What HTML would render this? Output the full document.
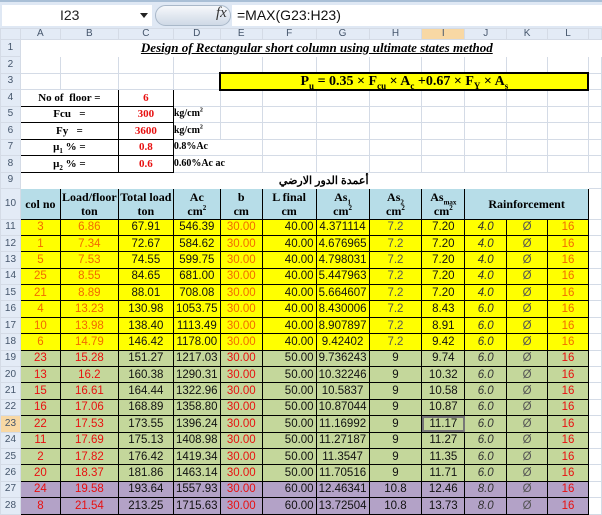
<!DOCTYPE html>
<html><head><meta charset="utf-8"><style>
*{margin:0;padding:0;box-sizing:border-box}
body{width:602px;height:509px;overflow:hidden;background:#fff;font-family:"Liberation Sans",sans-serif;position:relative}
#fb{position:absolute;left:0;top:0;width:602px;height:28px;background:#dfe8f4;border-top:2px solid #a9bfd6}
#nb{position:absolute;left:2px;top:3px;width:150px;height:21px;background:#fff;font-size:14px;line-height:21px;padding-left:58px;color:#222}
#arr{position:absolute;left:140px;top:11px;border-left:4px solid transparent;border-right:4px solid transparent;border-top:5px solid #222}
#pill{position:absolute;left:155px;top:3px;width:76px;height:21px;border-radius:11px;background:linear-gradient(#f6f8fb,#cfd9e6);border:1px solid #a9b8c9}
#fx{position:absolute;left:216px;top:3px;font:italic 15px "Liberation Serif",serif;color:#333}
#ft{position:absolute;left:232px;top:3px;width:370px;height:21px;background:#fff;font-size:14px;line-height:21px;padding-left:5px;color:#111}
table{position:absolute;left:0;top:28px;border-collapse:collapse;table-layout:fixed;font-size:11.5px}
td{border:1px solid #d4dbe6;white-space:nowrap;overflow:hidden;text-align:center;padding:0;line-height:12px}
sub,sup{line-height:0}
tr.ch td{background:#e3ebf6;color:#44556b;font-size:10px;height:11px;line-height:10px}
td.rh{background:#e3ebf6;color:#44556b;font-size:10px}
.sel{background:#f8d8a4!important}
.t{font-family:"Liberation Serif",serif;font-weight:bold}
.b td.d{border:1px solid #000}
.y td.d{background:#ffff00}
.g td.d{background:#c4d79b}
.p td.d{background:#b3a2c7}
.h td.d{background:#b7dde8;border:1px solid #000;font-family:"Liberation Serif",serif;font-weight:bold;font-size:12px;line-height:14px}
.o{color:#f26a00}.r{color:#e81010}.k{color:#111}.i{font-style:italic;color:#333}.z{color:#555}
.y .l{color:#f26a00}.g .l,.p .l{color:#e81010}
.f{text-align:right!important;padding-right:2px!important}
</style></head><body>
<div id="fb"><div id="nb">I23</div><div id="arr"></div><div id="pill"></div><div id="fx">fx</div><div id="ft">=MAX(G23:H23)</div></div>
<table>
<colgroup><col style="width:20px"><col style="width:40px"><col style="width:58px"><col style="width:55px"><col style="width:47px"><col style="width:42px"><col style="width:54px"><col style="width:53px"><col style="width:53px"><col style="width:43px"><col style="width:42px"><col style="width:41px"><col style="width:41px"><col style="width:13px"></colgroup>
<tr class="ch"><td></td><td>A</td><td>B</td><td>C</td><td>D</td><td>E</td><td>F</td><td>G</td><td>H</td><td class="sel">I</td><td>J</td><td>K</td><td>L</td><td></td></tr>
<tr style="height:16.5px"><td class="rh">1</td><td colspan="13" style="border-color:#fff;text-align:left;padding-left:120px;font:bold italic 13px 'Liberation Serif',serif;text-decoration:underline">Design of Rectangular short column using ultimate states method</td></tr>
<tr style="height:16.5px"><td class="rh">2</td><td></td><td></td><td></td><td></td><td></td><td></td><td></td><td></td><td></td><td></td><td></td><td></td><td></td></tr>
<tr style="height:16.5px"><td class="rh">3</td><td></td><td></td><td></td><td></td><td colspan="8" style="background:#ffff00;border:2px solid #000;font:bold 14px 'Liberation Serif',serif;line-height:13px">P<sub style="font-size:9px">u</sub> = 0.35 × F<sub style="font-size:9px">cu</sub> × A<sub style="font-size:9px">c</sub> +0.67 × F<sub style="font-size:9px">Y</sub> × A<sub style="font-size:9px">s</sub></td><td></td></tr>
<tr style="height:16.5px"><td class="rh">4</td><td colspan="2" class="t" style="border:1px solid #000;font-size:11px">No of &nbsp;floor =</td><td class="t r" style="border:1px solid #000;font-size:11px">6</td><td></td><td></td><td></td><td></td><td></td><td></td><td></td><td></td><td></td><td></td></tr>
<tr style="height:16.5px"><td class="rh">5</td><td colspan="2" class="t" style="border:1px solid #000;font-size:11px">Fcu &nbsp; =</td><td class="t r" style="border:1px solid #000;font-size:11px">300</td><td class="t" style="text-align:left;font-size:10px">kg/cm<sup style="font-size:6px">2</sup></td><td></td><td></td><td></td><td></td><td></td><td></td><td></td><td></td><td></td></tr>
<tr style="height:16.5px"><td class="rh">6</td><td colspan="2" class="t" style="border:1px solid #000;font-size:11px">Fy &nbsp; =</td><td class="t r" style="border:1px solid #000;font-size:11px">3600</td><td class="t" style="text-align:left;font-size:10px">kg/cm<sup style="font-size:6px">2</sup></td><td></td><td></td><td></td><td></td><td></td><td></td><td></td><td></td><td></td></tr>
<tr style="height:16.5px"><td class="rh">7</td><td colspan="2" class="t" style="border:1px solid #000;font-size:11px">μ<sub style="font-size:7px">1</sub> % =</td><td class="t r" style="border:1px solid #000;font-size:11px">0.8</td><td class="t" style="text-align:left;font-size:10px" colspan="2">0.8%Ac</td><td></td><td></td><td></td><td></td><td></td><td></td><td></td><td></td></tr>
<tr style="height:16.5px"><td class="rh">8</td><td colspan="2" class="t" style="border:1px solid #000;font-size:11px">μ<sub style="font-size:7px">2</sub> % =</td><td class="t r" style="border:1px solid #000;font-size:11px">0.6</td><td class="t" style="text-align:left;font-size:10px" colspan="2">0.60%Ac ac</td><td></td><td></td><td></td><td></td><td></td><td></td><td></td><td></td></tr>
<tr style="height:16.5px"><td class="rh">9</td><td colspan="12" style="border-color:#fff;text-align:left;padding-left:258px;font:bold 11px 'Liberation Sans','Noto Sans CJK SC',sans-serif"><span style="display:inline-block;direction:rtl">أعمدة الدور الارضي</span></td><td></td></tr>
<tr class="h" style="height:30.5px"><td class="rh">10</td><td class="d">col no</td><td class="d">Load/floor<br>ton</td><td class="d">Total load<br>ton</td><td class="d">Ac<br>cm<sup style="font-size:7px">2</sup></td><td class="d">b<br>cm</td><td class="d">L final<br>cm</td><td class="d">As<sub style="font-size:7px">1</sub><br>cm<sup style="font-size:7px">2</sup></td><td class="d">As<sub style="font-size:7px">2</sub><br>cm<sup style="font-size:7px">2</sup></td><td class="d">As<sub style="font-size:7px">max</sub><br>cm<sup style="font-size:7px">2</sup></td><td class="d" colspan="3">Rainforcement</td><td></td></tr>
<tr class="b y" style="height:16.4px"><td class="rh">11</td><td class="d o">3</td><td class="d o">6.86</td><td class="d k">67.91</td><td class="d k">546.39</td><td class="d o">30.00</td><td class="d k f">40.00</td><td class="d k">4.371114</td><td class="d z">7.2</td><td class="d k">7.20</td><td class="d i">4.0</td><td class="d z">Ø</td><td class="d l">16</td><td></td></tr>
<tr class="b y" style="height:16.4px"><td class="rh">12</td><td class="d o">1</td><td class="d o">7.34</td><td class="d k">72.67</td><td class="d k">584.62</td><td class="d o">30.00</td><td class="d k f">40.00</td><td class="d k">4.676965</td><td class="d z">7.2</td><td class="d k">7.20</td><td class="d i">4.0</td><td class="d z">Ø</td><td class="d l">16</td><td></td></tr>
<tr class="b y" style="height:16.4px"><td class="rh">13</td><td class="d o">5</td><td class="d o">7.53</td><td class="d k">74.55</td><td class="d k">599.75</td><td class="d o">30.00</td><td class="d k f">40.00</td><td class="d k">4.798031</td><td class="d z">7.2</td><td class="d k">7.20</td><td class="d i">4.0</td><td class="d z">Ø</td><td class="d l">16</td><td></td></tr>
<tr class="b y" style="height:16.4px"><td class="rh">14</td><td class="d o">25</td><td class="d o">8.55</td><td class="d k">84.65</td><td class="d k">681.00</td><td class="d o">30.00</td><td class="d k f">40.00</td><td class="d k">5.447963</td><td class="d z">7.2</td><td class="d k">7.20</td><td class="d i">4.0</td><td class="d z">Ø</td><td class="d l">16</td><td></td></tr>
<tr class="b y" style="height:16.4px"><td class="rh">15</td><td class="d o">21</td><td class="d o">8.89</td><td class="d k">88.01</td><td class="d k">708.08</td><td class="d o">30.00</td><td class="d k f">40.00</td><td class="d k">5.664607</td><td class="d z">7.2</td><td class="d k">7.20</td><td class="d i">4.0</td><td class="d z">Ø</td><td class="d l">16</td><td></td></tr>
<tr class="b y" style="height:16.4px"><td class="rh">16</td><td class="d o">4</td><td class="d o">13.23</td><td class="d k">130.98</td><td class="d k">1053.75</td><td class="d o">30.00</td><td class="d k f">40.00</td><td class="d k">8.430006</td><td class="d z">7.2</td><td class="d k">8.43</td><td class="d i">6.0</td><td class="d z">Ø</td><td class="d l">16</td><td></td></tr>
<tr class="b y" style="height:16.4px"><td class="rh">17</td><td class="d o">10</td><td class="d o">13.98</td><td class="d k">138.40</td><td class="d k">1113.49</td><td class="d o">30.00</td><td class="d k f">40.00</td><td class="d k">8.907897</td><td class="d z">7.2</td><td class="d k">8.91</td><td class="d i">6.0</td><td class="d z">Ø</td><td class="d l">16</td><td></td></tr>
<tr class="b y" style="height:16.4px"><td class="rh">18</td><td class="d o">6</td><td class="d o">14.79</td><td class="d k">146.42</td><td class="d k">1178.00</td><td class="d o">30.00</td><td class="d k f">40.00</td><td class="d k">9.42402</td><td class="d z">7.2</td><td class="d k">9.42</td><td class="d i">6.0</td><td class="d z">Ø</td><td class="d l">16</td><td></td></tr>
<tr class="b g" style="height:16.4px"><td class="rh">19</td><td class="d r">23</td><td class="d r">15.28</td><td class="d k">151.27</td><td class="d k">1217.03</td><td class="d r">30.00</td><td class="d k f">50.00</td><td class="d k">9.736243</td><td class="d k">9</td><td class="d k">9.74</td><td class="d i">6.0</td><td class="d z">Ø</td><td class="d l">16</td><td></td></tr>
<tr class="b g" style="height:16.4px"><td class="rh">20</td><td class="d r">13</td><td class="d r">16.2</td><td class="d k">160.38</td><td class="d k">1290.31</td><td class="d r">30.00</td><td class="d k f">50.00</td><td class="d k">10.32246</td><td class="d k">9</td><td class="d k">10.32</td><td class="d i">6.0</td><td class="d z">Ø</td><td class="d l">16</td><td></td></tr>
<tr class="b g" style="height:16.4px"><td class="rh">21</td><td class="d r">15</td><td class="d r">16.61</td><td class="d k">164.44</td><td class="d k">1322.96</td><td class="d r">30.00</td><td class="d k f">50.00</td><td class="d k">10.5837</td><td class="d k">9</td><td class="d k">10.58</td><td class="d i">6.0</td><td class="d z">Ø</td><td class="d l">16</td><td></td></tr>
<tr class="b g" style="height:16.4px"><td class="rh">22</td><td class="d r">16</td><td class="d r">17.06</td><td class="d k">168.89</td><td class="d k">1358.80</td><td class="d r">30.00</td><td class="d k f">50.00</td><td class="d k">10.87044</td><td class="d k">9</td><td class="d k">10.87</td><td class="d i">6.0</td><td class="d z">Ø</td><td class="d l">16</td><td></td></tr>
<tr class="b g" style="height:16.4px"><td class="rh sel">23</td><td class="d r">22</td><td class="d r">17.53</td><td class="d k">173.55</td><td class="d k">1396.24</td><td class="d r">30.00</td><td class="d k f">50.00</td><td class="d k">11.16992</td><td class="d k">9</td><td class="d k" style="outline:2px solid #777;outline-offset:-2px">11.17</td><td class="d i">6.0</td><td class="d z">Ø</td><td class="d l">16</td><td></td></tr>
<tr class="b g" style="height:16.4px"><td class="rh">24</td><td class="d r">11</td><td class="d r">17.69</td><td class="d k">175.13</td><td class="d k">1408.98</td><td class="d r">30.00</td><td class="d k f">50.00</td><td class="d k">11.27187</td><td class="d k">9</td><td class="d k">11.27</td><td class="d i">6.0</td><td class="d z">Ø</td><td class="d l">16</td><td></td></tr>
<tr class="b g" style="height:16.4px"><td class="rh">25</td><td class="d r">2</td><td class="d r">17.82</td><td class="d k">176.42</td><td class="d k">1419.34</td><td class="d r">30.00</td><td class="d k f">50.00</td><td class="d k">11.3547</td><td class="d k">9</td><td class="d k">11.35</td><td class="d i">6.0</td><td class="d z">Ø</td><td class="d l">16</td><td></td></tr>
<tr class="b g" style="height:16.4px"><td class="rh">26</td><td class="d r">20</td><td class="d r">18.37</td><td class="d k">181.86</td><td class="d k">1463.14</td><td class="d r">30.00</td><td class="d k f">50.00</td><td class="d k">11.70516</td><td class="d k">9</td><td class="d k">11.71</td><td class="d i">6.0</td><td class="d z">Ø</td><td class="d l">16</td><td></td></tr>
<tr class="b p" style="height:16.4px"><td class="rh">27</td><td class="d r">24</td><td class="d r">19.58</td><td class="d k">193.64</td><td class="d k">1557.93</td><td class="d r">30.00</td><td class="d k f">60.00</td><td class="d k">12.46341</td><td class="d k">10.8</td><td class="d k">12.46</td><td class="d i">8.0</td><td class="d z">Ø</td><td class="d l">16</td><td></td></tr>
<tr class="b p" style="height:16.4px"><td class="rh">28</td><td class="d r">8</td><td class="d r">21.54</td><td class="d k">213.25</td><td class="d k">1715.63</td><td class="d r">30.00</td><td class="d k f">60.00</td><td class="d k">13.72504</td><td class="d k">10.8</td><td class="d k">13.73</td><td class="d i">8.0</td><td class="d z">Ø</td><td class="d l">16</td><td></td></tr>
</table>
</body></html>
